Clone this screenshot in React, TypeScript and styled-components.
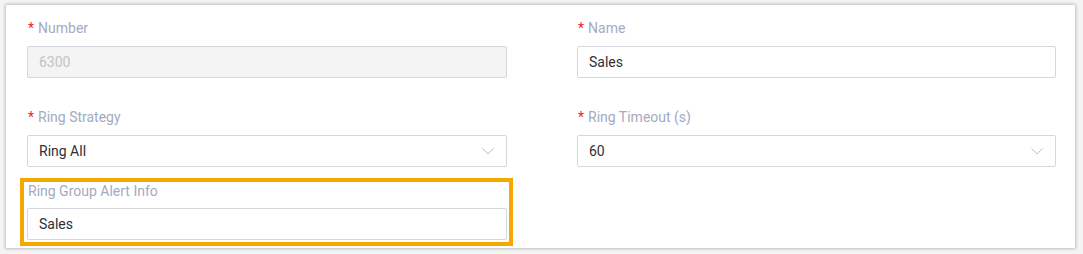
import React from "react";
import styled, { createGlobalStyle } from "styled-components";

const GlobalStyle = createGlobalStyle`
  html, body {
    margin: 0;
    padding: 0;
    background: #ffffff;
  }
  body {
    font-family: Roboto, "Liberation Sans", Arial, sans-serif;
  }
`;

type FieldProps = {
  label: string;
  required?: boolean;
  value: string;
  disabled?: boolean;
  select?: boolean;
};

const Field = (props: FieldProps) => {
  return (
    <FieldWrap>
      <Label>
        {props.required && <Star>*</Star>}
        {props.label}
      </Label>
      <InputBox $disabled={props.disabled}>
        <InputText $disabled={props.disabled}>{props.value}</InputText>
        {props.select && (
          <Chevron width="12" height="7" viewBox="0 0 12 7">
            <path d="M0.5 0.5 L6 6 L11.5 0.5" fill="none" stroke="#bfbfc6" strokeWidth="1" />
          </Chevron>
        )}
      </InputBox>
    </FieldWrap>
  );
};

export default function App() {
  return (
    <Page>
      <GlobalStyle />
      <Card>
        <Grid>
          <Field label="Number" required value="6300" disabled />
          <Field label="Name" required value="Sales" />
          <Field label="Ring Strategy" required value="Ring All" select />
          <Field label="Ring Timeout (s)" required value="60" select />
          <Highlight>
            <AlertLabel>Ring Group Alert Info</AlertLabel>
            <InputBox>
              <InputText>Sales</InputText>
            </InputBox>
          </Highlight>
        </Grid>
      </Card>
    </Page>
  );
}

const Page = styled.div`
  width: 1083px;
  height: 254px;
  padding: 5px 8px 0 6px;
  box-sizing: border-box;
  background: #f4f4f4;
`;

const Card = styled.div`
  height: 243px;
  background: #ffffff;
  box-shadow: 0 0 3px 1px rgba(0, 0, 0, 0.22);
  padding: 12px 19px 0 21px;
  box-sizing: border-box;
`;

const Grid = styled.div`
  display: grid;
  grid-template-columns: 480px 479px;
  column-gap: 70px;
  row-gap: 28px;
`;

const FieldWrap = styled.div`
  display: flex;
  flex-direction: column;
`;

const Label = styled.div`
  font-size: 14px;
  line-height: 22px;
  color: #a3abbf;
  margin-bottom: 7px;
  padding-left: 1px;
`;

const AlertLabel = styled.div`
  font-size: 14px;
  line-height: 18px;
  color: #a3abbf;
  margin-bottom: 8px;
  padding-left: 1px;
`;

const Star = styled.span`
  color: #f5222d;
  margin-right: 4px;
`;

const InputBox = styled.div<{ $disabled?: boolean }>`
  height: 32px;
  box-sizing: border-box;
  border: 1px solid #d6d6de;
  border-radius: 2px;
  background: ${(p) => (p.$disabled ? "#f4f4f4" : "#ffffff")};
  display: flex;
  align-items: center;
  justify-content: space-between;
  padding: 0 12px 0 11px;
`;

const InputText = styled.span<{ $disabled?: boolean }>`
  font-size: 14px;
  color: ${(p) => (p.$disabled ? "#c3c3c3" : "#2f3035")};
`;

const Chevron = styled.svg`
  display: block;
`;

const Highlight = styled.div`
  margin-top: -17px;
  margin-left: -7px;
  width: 493px;
  height: 68px;
  box-sizing: border-box;
  border: 4px solid #f5a800;
  padding: 0 2px 0 3px;
  display: flex;
  flex-direction: column;
`;
